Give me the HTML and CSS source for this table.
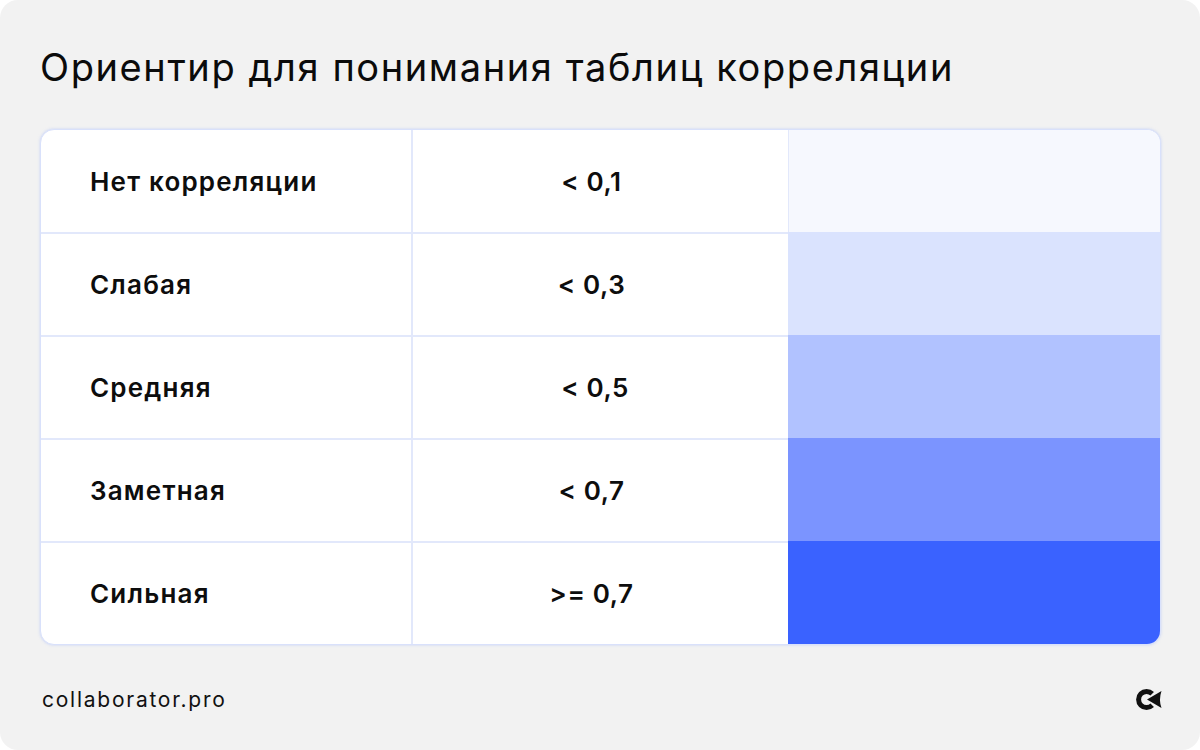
FILE: index.html
```html
<!DOCTYPE html>
<html lang="ru">
<head>
<meta charset="utf-8">
<link rel="stylesheet" href="styles.css">
</head>
<body>
<div class="card">
  <h1 class="title">Ориентир для понимания таблиц корреляции</h1>
  <div class="table">
    <div class="row">
      <div class="cell label">Нет корреляции</div>
      <div class="cell value">&lt; 0,1</div>
      <div class="cell swatch s1"></div>
    </div>
    <div class="row">
      <div class="cell label">Слабая</div>
      <div class="cell value">&lt; 0,3</div>
      <div class="cell swatch s2"></div>
    </div>
    <div class="row">
      <div class="cell label">Средняя</div>
      <div class="cell value">&nbsp;&lt; 0,5</div>
      <div class="cell swatch s3"></div>
    </div>
    <div class="row">
      <div class="cell label">Заметная</div>
      <div class="cell value">&lt; 0,7</div>
      <div class="cell swatch s4"></div>
    </div>
    <div class="row">
      <div class="cell label">Сильная</div>
      <div class="cell value">&gt;= 0,7</div>
      <div class="cell swatch s5"></div>
    </div>
  </div>
  <div class="footer">
    <span class="site">collaborator.pro</span>
    <svg class="logo" width="30" height="26" viewBox="0 0 30 26">
      <path d="M18.2 7.8 A8 8 0 1 0 18.2 19.2" fill="none" stroke="#111" stroke-width="5"/>
      <path d="M13 13.5 L27.5 5 Q24.5 13.5 27.5 22 Z" fill="#111"/>
    </svg>
  </div>
</div>
</body>
</html>
```

FILE: styles.css
```css
* { box-sizing: border-box; }
html, body { margin: 0; padding: 0; background: #ffffff; }
body { font-family: Inter, "Noto Sans", sans-serif; color: #0d0d0d; }

.card {
  width: 1200px;
  height: 750px;
  background: #f2f2f2;
  border-radius: 18px;
  padding: 41px 39px 0 40px;
  display: flex;
  flex-direction: column;
}

.title {
  margin: 0;
  font-weight: 400;
  font-size: 38px;
  line-height: 52px;
  letter-spacing: 1.6px;
  color: #0b0b0b;
}

.table {
  margin-top: 36px;
  background: #ffffff;
  border: 1px solid #d9e1fb;
  border-radius: 14px;
  box-shadow: 0 0 3px rgba(170, 190, 250, 0.6);
  overflow: hidden;
  display: flex;
  flex-direction: column;
}

.row {
  display: grid;
  grid-template-columns: 372px 375px 1fr;
  height: 103px;
  border-top: 2px solid #e2e8fb;
}
.row:first-child { border-top: none; height: 102px; }

.cell {
  display: flex;
  align-items: center;
  font-size: 26px;
  font-weight: 600;
  letter-spacing: 1.2px;
}
.label { padding-left: 49px; border-right: 2px solid #e2e8fb; }
.value { justify-content: center; padding-right: 18px; letter-spacing: 0.6px; }

.swatch { margin-top: -2px; }
.row:first-child .swatch { margin-top: 0; }
.s1 { background: #f6f8fe; border-left: 1px solid #e2e8fb; }
.s2 { background: #dae3fe; }
.s3 { background: #b1c2ff; }
.s4 { background: #7b94ff; }
.s5 { background: #3a62ff; }

.footer {
  margin-top: 41px;
  display: flex;
  align-items: center;
  justify-content: space-between;
  padding-left: 2px;
}
.site {
  font-size: 21px;
  font-weight: 400;
  letter-spacing: 1.75px;
  color: #111;
}
.logo { display: block; margin-right: -3px; }
```
